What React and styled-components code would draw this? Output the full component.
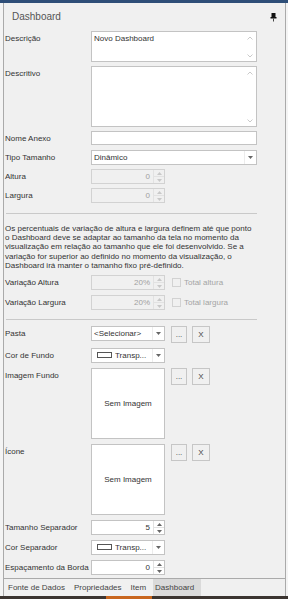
import styled, { createGlobalStyle } from "styled-components";

const GlobalStyle = createGlobalStyle`
  html, body {
    margin: 0;
    padding: 0;
    background: #f4f4f4;
  }
  body {
    font-family: "Liberation Sans", Arial, sans-serif;
    color: #333;
  }
`;

const Page = styled.div`
  width: 288px;
  height: 599px;
  display: flex;
  flex-direction: column;
  overflow: hidden;
`;

const TopBar = styled.div`
  flex: none;
  height: 3px;
  background: #2e4e78;
`;

const Frame = styled.div`
  flex: 1;
  min-height: 0;
  margin: 0 2px 0 3px;
  border-left: 1px solid #aaaaaa;
  border-right: 1px solid #aaaaaa;
  background: #f0f0f0;
  display: flex;
  flex-direction: column;
`;

const Panel = styled.div`
  flex: 1;
  min-height: 0;
  border-bottom: 1px solid #aaaaaa;
  display: flex;
  flex-direction: column;
`;

const Header = styled.div`
  height: 28px;
  flex: none;
  display: flex;
  align-items: center;
  justify-content: space-between;
  padding: 0 8px 0 8px;
`;

const Title = styled.span`
  font-size: 10px;
  color: #555;
  margin-top: -1px;
`;

const Form = styled.div`
  padding-left: 1px;
  display: flex;
  flex-direction: column;
`;

const Section = styled.div`
  display: flex;
  flex-direction: column;
  gap: ${(p) => p.$gap}px;
  margin-top: ${(p) => p.$top || 0}px;
`;

const Field = styled.div`
  display: grid;
  grid-template-columns: 86px 1fr;
  align-items: start;
`;

const Label = styled.span`
  font-size: 8px;
  line-height: 15px;
  color: #333;
  white-space: nowrap;
`;

const Controls = styled.div`
  display: flex;
  align-items: flex-start;
  gap: 5px;
`;

const Box = styled.div`
  box-sizing: border-box;
  width: ${(p) => p.$w}px;
  height: ${(p) => p.$h || 15}px;
  border: 1px solid ${(p) => (p.$disabled ? "#d2d2d2" : "#c3c3c3")};
  background: ${(p) => (p.$disabled ? "#f0f0f0" : "#ffffff")};
  display: flex;
  font-size: 8px;
  color: ${(p) => (p.$disabled ? "#a0a0a0" : "#333")};
`;

const MemoText = styled.div`
  flex: 1;
  padding: 2px 2px;
  line-height: 10px;
`;

const ScrollCol = styled.div`
  width: 12px;
  display: flex;
  flex-direction: column;
  justify-content: space-between;
  align-items: center;
  padding: 4px 0 3px;
`;

const InputText = styled.div`
  flex: 1;
  padding: 0 2px;
  line-height: 13px;
  white-space: nowrap;
  overflow: hidden;
`;

const DropBtn = styled.div`
  width: 11px;
  border-left: 1px solid #ececec;
  display: flex;
  align-items: center;
  justify-content: center;
`;

const SpinValue = styled.div`
  flex: 1;
  text-align: right;
  padding-right: 3px;
  line-height: 13px;
`;

const SpinBtns = styled.div`
  width: 10px;
  border-left: 1px solid #e2e2e2;
  display: flex;
  flex-direction: column;
`;

const SpinHalf = styled.div`
  flex: 1;
  display: flex;
  align-items: center;
  justify-content: center;
  & + & {
    border-top: 1px solid #e2e2e2;
  }
`;

const SmallButton = styled.div`
  box-sizing: border-box;
  width: ${(p) => p.$w}px;
  height: 17px;
  border: 1px solid #c6c6c6;
  background: #f0f0f0;
  font-size: 8px;
  color: #444;
  display: flex;
  align-items: center;
  justify-content: center;
  line-height: 1;
`;

const Swatch = styled.div`
  width: 15px;
  height: 6px;
  border: 1px solid #555;
  background: #fff;
  margin: 3px 3px 0 5px;
  box-sizing: border-box;
`;

const ImageBox = styled.div`
  box-sizing: border-box;
  width: 74px;
  height: ${(p) => p.$h}px;
  border: 1px solid #c3c3c3;
  background: #fff;
  display: flex;
  align-items: center;
  justify-content: center;
  font-size: 8px;
  color: #333;
`;

const CheckWrap = styled.div`
  display: flex;
  align-items: center;
  height: 15px;
  margin-left: 2px;
  gap: 3px;
`;

const Check = styled.div`
  box-sizing: border-box;
  width: 9px;
  height: 9px;
  border: 1px solid #d2d2d2;
  background: #f0f0f0;
`;

const CheckLabel = styled.span`
  font-size: 8px;
  color: #a4a4a4;
`;

const Divider = styled.div`
  height: 1px;
  width: 251px;
  margin: ${(p) => p.$m};
  background: #c9c9c9;
`;

const Note = styled.p`
  margin: 10px 0 0;
  font-size: 8px;
  line-height: 9.2px;
  color: #333;
  & span {
    display: block;
    white-space: nowrap;
  }
`;

const TabBar = styled.div`
  flex: none;
  height: 17px;
  display: flex;
  padding-left: 2px;
`;

const Tab = styled.div`
  padding: 0 7px 0 2px;
  font-size: 8px;
  line-height: 17px;
  color: #444;
  background: ${(p) => (p.$active ? "#dadada" : "transparent")};
`;

const BottomStrip = styled.div`
  flex: none;
  height: 3px;
  background: linear-gradient(
    to right,
    #3b3430 0,
    #3b3430 106px,
    #c8661e 106px,
    #c8661e 152px,
    #3b3430 152px
  );
`;

const Pin = () => (
  <svg width="7" height="9" viewBox="0 0 7 9">
    <rect x="1.5" y="0" width="4" height="4" fill="#111" />
    <rect x="0.5" y="4" width="6" height="1.5" fill="#111" />
    <rect x="3" y="5.5" width="1" height="3" fill="#444" />
  </svg>
);

const Chevron = ({ up }) => (
  <svg width="6" height="4" viewBox="0 0 6 4">
    <path
      d={up ? "M0.5 3.5 L3 1 L5.5 3.5" : "M0.5 0.5 L3 3 L5.5 0.5"}
      fill="none"
      stroke="#c4c4c4"
      strokeWidth="0.9"
    />
  </svg>
);

const Tri = ({ up, color = "#555" }) => (
  <svg width="5" height="3" viewBox="0 0 5 3">
    <path d={up ? "M0 3 L2.5 0 L5 3 Z" : "M0 0 L5 0 L2.5 3 Z"} fill={color} />
  </svg>
);

const Memo = ({ h, text }) => (
  <Box $w={166} $h={h}>
    <MemoText>{text}</MemoText>
    <ScrollCol>
      <Chevron up />
      <Chevron />
    </ScrollCol>
  </Box>
);

const Select = ({ w, children }) => (
  <Box $w={w}>
    <InputText>{children}</InputText>
    <DropBtn>
      <Tri color="#666" />
    </DropBtn>
  </Box>
);

const ColorSelect = () => (
  <Box $w={74}>
    <Swatch />
    <InputText style={{ padding: 0 }}>Transp...</InputText>
    <DropBtn>
      <Tri color="#666" />
    </DropBtn>
  </Box>
);

const Spin = ({ value, disabled }) => {
  const c = disabled ? "#c8c8c8" : "#666";
  return (
    <Box $w={74} $disabled={disabled}>
      <SpinValue>{value}</SpinValue>
      <SpinBtns>
        <SpinHalf>
          <Tri up color={c} />
        </SpinHalf>
        <SpinHalf>
          <Tri color={c} />
        </SpinHalf>
      </SpinBtns>
    </Box>
  );
};

const Buttons = () => (
  <>
    <SmallButton $w={16} style={{ marginLeft: 1 }}>...</SmallButton>
    <SmallButton $w={18}>X</SmallButton>
  </>
);

const noteLines = [
  "Os percentuais de variação de altura e largura definem até que ponto",
  "o Dashboard deve se adaptar ao tamanho da tela no momento da",
  "visualização em relação ao tamanho que ele foi desenvolvido. Se a",
  "variação for superior ao definido no momento da visualização, o",
  "Dashboard irá manter o tamanho fixo pré-definido.",
];

const tabs = ["Fonte de Dados", "Propriedades", "Item", "Dashboard"];

export default function App() {
  return (
    <>
      <GlobalStyle />
      <Page>
        <TopBar />
        <Frame>
          <Panel>
            <Header>
              <Title>Dashboard</Title>
              <Pin />
            </Header>
            <Form>
              <Section $gap={4}>
                <Field>
                  <Label>Descrição</Label>
                  <Memo h={31} text="Novo Dashboard" />
                </Field>
                <Field>
                  <Label>Descritivo</Label>
                  <Memo h={61} />
                </Field>
                <Field>
                  <Label>Nome Anexo</Label>
                  <Box $w={166} $h={14} />
                </Field>
                <Field>
                  <Label>Tipo Tamanho</Label>
                  <Select w={166}>Dinâmico</Select>
                </Field>
                <Field>
                  <Label>Altura</Label>
                  <Spin value="0" disabled />
                </Field>
                <Field>
                  <Label>Largura</Label>
                  <Spin value="0" disabled />
                </Field>
              </Section>
              <Divider $m="10px 0 0 1px" />
              <Note>
                {noteLines.map((l) => (
                  <span key={l}>{l}</span>
                ))}
              </Note>
              <Section $gap={5} $top={5}>
                <Field>
                  <Label>Variação Altura</Label>
                  <Controls>
                    <Spin value="20%" disabled />
                    <CheckWrap>
                      <Check />
                      <CheckLabel>Total altura</CheckLabel>
                    </CheckWrap>
                  </Controls>
                </Field>
                <Field>
                  <Label>Variação Largura</Label>
                  <Controls>
                    <Spin value="20%" disabled />
                    <CheckWrap>
                      <Check />
                      <CheckLabel>Total largura</CheckLabel>
                    </CheckWrap>
                  </Controls>
                </Field>
              </Section>
              <Divider $m="9px 0 0 1px" />
              <Section $gap={5} $top={6}>
                <Field>
                  <Label>Pasta</Label>
                  <Controls>
                    <Select w={74}>&lt;Selecionar&gt;</Select>
                    <Buttons />
                  </Controls>
                </Field>
                <Field>
                  <Label>Cor de Fundo</Label>
                  <ColorSelect />
                </Field>
                <Field>
                  <Label>Imagem Fundo</Label>
                  <Controls>
                    <ImageBox $h={71}>Sem Imagem</ImageBox>
                    <Buttons />
                  </Controls>
                </Field>
                <Field>
                  <Label>Ícone</Label>
                  <Controls>
                    <ImageBox $h={71}>Sem Imagem</ImageBox>
                    <Buttons />
                  </Controls>
                </Field>
                <Field>
                  <Label>Tamanho Separador</Label>
                  <Spin value="5" />
                </Field>
                <Field>
                  <Label>Cor Separador</Label>
                  <ColorSelect />
                </Field>
                <Field>
                  <Label>Espaçamento da Borda</Label>
                  <Spin value="0" />
                </Field>
              </Section>
            </Form>
          </Panel>
          <TabBar>
            {tabs.map((t) => (
              <Tab key={t} $active={t === "Dashboard"}>
                {t}
              </Tab>
            ))}
          </TabBar>
        </Frame>
        <BottomStrip />
      </Page>
    </>
  );
}
